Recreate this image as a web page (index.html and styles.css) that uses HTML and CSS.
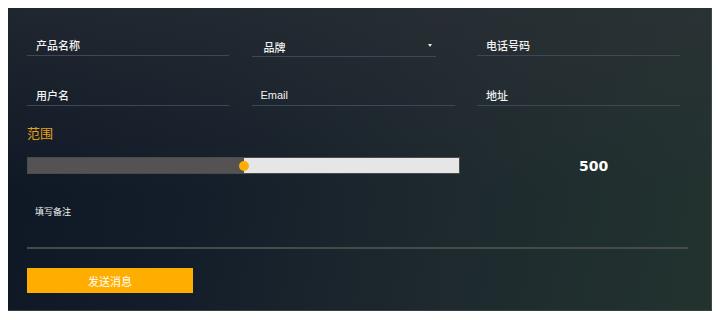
FILE: index.html
```html
<!DOCTYPE html>
<html lang="zh">
<head>
<meta charset="utf-8">
<link rel="stylesheet" href="styles.css">
</head>
<body>
<form class="panel">
  <div class="fields">
    <div class="field"><span class="ph">产品名称</span></div>
    <div class="field select"><span class="ph ph-select">品牌</span><span class="arrow"></span></div>
    <div class="field"><span class="ph">电话号码</span></div>
    <div class="field"><span class="ph">用户名</span></div>
    <div class="field"><span class="ph ph-latin">Email</span></div>
    <div class="field"><span class="ph">地址</span></div>
  </div>
  <div class="range-label">范围</div>
  <div class="range-row">
    <div class="slider">
      <div class="fill" style="width: 50%"></div>
      <div class="thumb" style="left: 50%"></div>
    </div>
    <div class="value">500</div>
  </div>
  <div class="note-label">填写备注</div>
  <div class="textarea"></div>
  <button type="button" class="send">发送消息</button>
</form>
</body>
</html>
```
FILE: styles.css
```css
html, body {
  margin: 0;
  padding: 0;
  background: #ffffff;
}
body {
  padding: 8px;
  font-family: "Liberation Sans", "Noto Sans CJK SC", sans-serif;
}
.panel {
  width: 704px;
  height: 303px;
  box-sizing: border-box;
  padding: 27px 0 0 19px;
  border-right: 1px solid #3c4a47;
  border-bottom: 1px solid #34423f;
  background:
    linear-gradient(to bottom, rgba(48, 50, 56, 0.55) 0%, rgba(48, 50, 56, 0) 60%),
    linear-gradient(100deg, #0e1825 0%, #141e2a 30%, #1e2a2e 65%, #22332f 100%);
  display: flex;
  flex-direction: column;
  align-items: flex-start;
}
.fields {
  display: grid;
  grid-template-columns: 202px 203px 203px;
  column-gap: 22.5px;
  row-gap: 28px;
}
.field {
  position: relative;
  height: 20px;
  border-bottom: 1px solid #3e4753;
  display: flex;
  align-items: center;
  padding-left: 9px;
  color: #f2f2f2;
  font-size: 11px;
  font-family: "Noto Sans CJK SC", "Liberation Sans", sans-serif;
  font-weight: 500;
}
.field.select {
  height: 21px;
  box-sizing: content-box;
  padding-left: 12px;
  width: 172px;
}
.ph-select {
  margin-top: 3px;
}
.ph-latin {
  font-family: "Liberation Sans", sans-serif;
  font-weight: 400;
}
.arrow {
  position: absolute;
  right: 4px;
  top: 9px;
  width: 0;
  height: 0;
  border-left: 2px solid transparent;
  border-right: 2px solid transparent;
  border-top: 3px solid #e8e8e8;
}
.range-label {
  margin-top: 19px;
  font-size: 13px;
  line-height: 16px;
  color: #e8a116;
  font-family: "Noto Sans CJK SC", sans-serif;
}
.range-row {
  margin-top: 16px;
  display: flex;
  align-items: center;
}
.slider {
  position: relative;
  width: 433px;
  height: 17px;
  box-sizing: border-box;
  background: #e6e6e6;
  border: 1px solid #4a4a4a;
}
.fill {
  height: 100%;
  background: #545252;
}
.thumb {
  position: absolute;
  top: 2.5px;
  width: 10px;
  height: 10px;
  margin-left: -5px;
  border-radius: 50%;
  background: #ffad00;
}
.value {
  margin-left: 119px;
  color: #ffffff;
  font-family: "DejaVu Sans", sans-serif;
  font-weight: bold;
  font-size: 14px;
}
.note-label {
  margin-top: 33px;
  margin-left: 8px;
  font-size: 9px;
  line-height: 10px;
  color: #f0f0f0;
  font-family: "Noto Sans CJK SC", sans-serif;
}
.textarea {
  width: 661px;
  height: 30px;
  border-bottom: 2px solid #454a4b;
}
.send {
  margin-top: 19px;
  width: 166px;
  height: 25px;
  border: none;
  padding: 0;
  background: #ffae00;
  color: #ffffff;
  font-size: 11px;
  font-family: "Noto Sans CJK SC", sans-serif;
}
```
